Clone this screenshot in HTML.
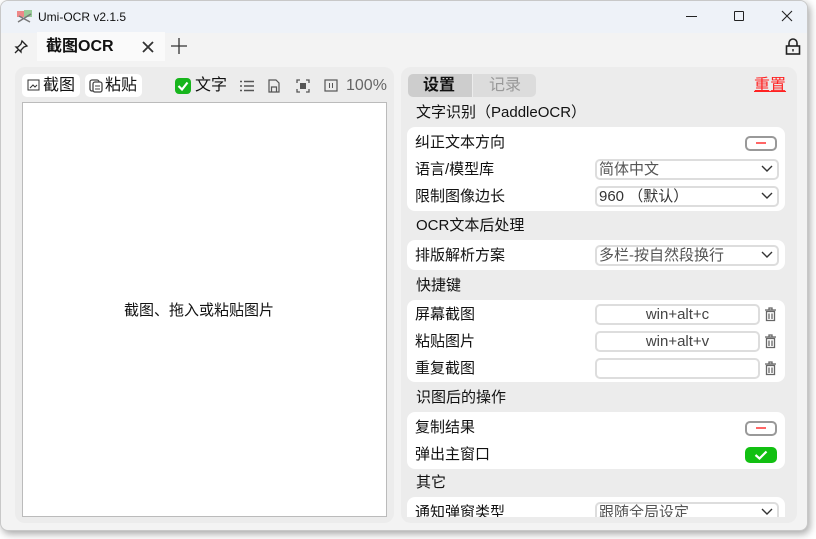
<!DOCTYPE html><html><head><meta charset="utf-8"><style>
*{margin:0;padding:0;box-sizing:border-box}
body{width:816px;height:539px;background:#fff;position:relative;overflow:hidden;font-family:"Liberation Sans","Noto Sans CJK SC",sans-serif;color:#111}
.a{position:absolute}
#win{left:0;top:0;width:808px;height:531px;background:#f3f3f3;border:1px solid #c8c8c8;border-radius:8px;overflow:hidden;box-shadow:2px 3px 8px rgba(0,0,0,.35)}
.t{position:absolute;font-size:15px;line-height:20px;white-space:nowrap}
.card{position:absolute;left:6px;width:378px;background:#fff;border-radius:8px}
.sel{position:absolute;left:188px;width:184px;height:21px;border:2px solid #ddd;border-radius:5px;font-size:15px;line-height:17px;padding-left:2px;color:#555}
.sel svg{position:absolute;right:4px;top:4px}
.hk{position:absolute;left:188px;width:165px;height:21px;border:2px solid #ddd;border-radius:5px;font-size:15px;line-height:17px;text-align:center;color:#444}
.tog{position:absolute;left:338px;width:32px;height:15px;border:2px solid #999;border-radius:5px}
.tog:after{content:"";position:absolute;left:9px;top:4px;width:10px;height:2px;background:#f66}
</style></head><body>
<div id="win" class="a">
<div class="a" style="left:0;top:0;width:808px;height:32px;background:#eef2f8"></div>
<svg class="a" style="left:15px;top:7px" width="18" height="16"><rect x="1" y="3" width="7" height="6" fill="#e88"/><rect x="8" y="2" width="8" height="7" fill="#9c9"/><path d="M2 14L15 6M3 8L14 14" stroke="#777" stroke-width="1.5"/></svg>
<div class="t" style="left:37px;top:6px;font-size:12px">Umi-OCR v2.1.5</div>
<div class="a" style="left:685px;top:15px;width:11px;height:1px;background:#222"></div>
<div class="a" style="left:733px;top:10px;width:10px;height:10px;border:1px solid #222;border-radius:1px"></div>
<svg class="a" style="left:780px;top:9px" width="12" height="12"><path d="M1 1L11 11M11 1L1 11" stroke="#222" stroke-width="1.1"/></svg>
<div class="a" style="left:36px;top:31px;width:128px;height:29px;background:#fafafa"></div>
<svg class="a" style="left:13px;top:38px" width="15" height="15"><path d="M8 2L13 7L10 8L7 11L7 13L2 8L4 8L7 5Z M4.5 10.5L1 14" fill="none" stroke="#222" stroke-width="1.3"/></svg>
<div class="t" style="left:45px;top:36px;font-size:16px;font-weight:bold">截图OCR</div>
<svg class="a" style="left:141px;top:40px" width="12" height="12"><path d="M1 1L11 11M11 1L1 11" stroke="#333" stroke-width="1.8"/></svg>
<svg class="a" style="left:170px;top:37px" width="16" height="16"><path d="M8 0V16M0 8H16" stroke="#333" stroke-width="1.3"/></svg>
<svg class="a" style="left:784px;top:37px" width="16" height="17"><path d="M4 8V5a4 4 0 0 1 8 0V8" fill="none" stroke="#222" stroke-width="1.6"/><rect x="1.5" y="8" width="13" height="8" fill="none" stroke="#222" stroke-width="1.6"/><rect x="7.3" y="11" width="1.4" height="2.5" fill="#222"/></svg>

<div class="a" style="left:14px;top:66px;width:379px;height:456px;background:#ececec;border-radius:10px">
<div class="a" style="left:7px;top:7px;width:58px;height:23px;background:#fff;border-radius:5px"></div>
<svg class="a" style="left:12px;top:12px" width="13" height="12"><rect x="1" y="1" width="11" height="10" fill="none" stroke="#333"/><path d="M3 9L6 6L8 8L10 6" fill="none" stroke="#333"/></svg>
<div class="t" style="left:28px;top:9px;font-size:16px">截图</div>
<div class="a" style="left:70px;top:7px;width:57px;height:23px;background:#fff;border-radius:5px"></div>
<svg class="a" style="left:74px;top:11px" width="14" height="15"><rect x="1" y="2" width="9" height="11" rx="2" fill="none" stroke="#444" stroke-width="1.3"/><rect x="4" y="4" width="9" height="10" rx="2" fill="#fff" stroke="#444" stroke-width="1.3"/><path d="M6 8H11M6 11H11" stroke="#444"/></svg>
<div class="t" style="left:90px;top:9px;font-size:16px">粘贴</div>
<svg class="a" style="left:160px;top:11px" width="16" height="16"><rect width="16" height="16" rx="4" fill="#17b51c"/><path d="M3.5 8L7 11.5L12.5 4.5" fill="none" stroke="#fff" stroke-width="2.2"/></svg>
<div class="t" style="left:180px;top:9px;font-size:16px">文字</div>
<svg class="a" style="left:225px;top:13px" width="14" height="12"><path d="M0 1.5H2M4 1.5H14M0 6H2M4 6H14M0 10.5H2M4 10.5H14" stroke="#555" stroke-width="1.4"/></svg>
<svg class="a" style="left:253px;top:12px" width="12" height="14"><path d="M1 1H8L11 4V13H1Z M3.5 13V8H8.5V13" fill="none" stroke="#555" stroke-width="1.2"/></svg>
<svg class="a" style="left:281px;top:12px" width="14" height="14"><path d="M1 4V1H4M10 1H13V4M13 10V13H10M4 13H1V10" fill="none" stroke="#555" stroke-width="1.3"/><rect x="4" y="4" width="6" height="6" fill="#555"/></svg>
<svg class="a" style="left:309px;top:12px" width="14" height="13"><rect x="1" y="1" width="12" height="11" fill="none" stroke="#555" stroke-width="1.2"/><path d="M5.5 4V9M8.5 4V9" stroke="#555"/></svg>
<div class="t" style="left:331px;top:9px;font-size:16px;color:#666">100%</div>
<div class="a" style="left:7px;top:35px;width:365px;height:415px;background:#fff;border:1px solid #bbb"></div>
<div class="t" style="left:109px;top:234px">截图、拖入或粘贴图片</div>
</div>

<div class="a" style="left:400px;top:66px;width:396px;height:456px;background:#ececec;border-radius:10px;overflow:hidden">
<div class="a" style="left:7px;top:7px;width:64px;height:23px;background:#cdcdcd;border-radius:5px 0 0 5px"></div>
<div class="a" style="left:72px;top:7px;width:63px;height:23px;background:#dcdcdc;border-radius:0 5px 5px 0"></div>
<div class="t" style="left:22px;top:9px;font-size:16px;font-weight:bold">设置</div>
<div class="t" style="left:88px;top:9px;font-size:16px;color:#999">记录</div>
<div class="t" style="left:353px;top:9px;font-size:16px;color:#f22;text-decoration:underline">重置</div>
<div class="t" style="left:15px;top:36px">文字识别（PaddleOCR）</div>
<div class="card" style="top:60px;height:84px">
<div class="t" style="left:8px;top:6px">纠正文本方向</div><div class="tog" style="top:9px"></div>
<div class="t" style="left:8px;top:33px">语言/模型库</div><div class="sel" style="top:32px">简体中文<svg width="12" height="8"><path d="M1 1L6 6L11 1" fill="none" stroke="#333" stroke-width="1.4"/></svg></div>
<div class="t" style="left:8px;top:60px">限制图像边长</div><div class="sel" style="top:59px;color:#333">960 （默认）<svg width="12" height="8"><path d="M1 1L6 6L11 1" fill="none" stroke="#333" stroke-width="1.4"/></svg></div>
</div>
<div class="t" style="left:15px;top:149px">OCR文本后处理</div>
<div class="card" style="top:173px;height:30px">
<div class="t" style="left:8px;top:6px">排版解析方案</div><div class="sel" style="top:5px">多栏-按自然段换行<svg width="12" height="8"><path d="M1 1L6 6L11 1" fill="none" stroke="#333" stroke-width="1.4"/></svg></div>
</div>
<div class="t" style="left:15px;top:209px">快捷键</div>
<div class="card" style="top:233px;height:82px">
<div class="t" style="left:8px;top:5px">屏幕截图</div><div class="hk" style="top:4px">win+alt+c</div>
<div class="t" style="left:8px;top:32px">粘贴图片</div><div class="hk" style="top:31px">win+alt+v</div>
<div class="t" style="left:8px;top:59px">重复截图</div><div class="hk" style="top:58px"></div>
<svg class="a" style="left:357px;top:7px" width="13" height="15"><path d="M1 3H12M5 3V1H8V3M2.5 4.5H10.5V13.5H2.5Z M5 6.5V12M8 6.5V12" fill="none" stroke="#666" stroke-width="1.3"/></svg>
<svg class="a" style="left:357px;top:34px" width="13" height="15"><path d="M1 3H12M5 3V1H8V3M2.5 4.5H10.5V13.5H2.5Z M5 6.5V12M8 6.5V12" fill="none" stroke="#666" stroke-width="1.3"/></svg>
<svg class="a" style="left:357px;top:61px" width="13" height="15"><path d="M1 3H12M5 3V1H8V3M2.5 4.5H10.5V13.5H2.5Z M5 6.5V12M8 6.5V12" fill="none" stroke="#666" stroke-width="1.3"/></svg>
</div>
<div class="t" style="left:15px;top:321px">识图后的操作</div>
<div class="card" style="top:345px;height:57px">
<div class="t" style="left:8px;top:6px">复制结果</div><div class="tog" style="top:9px"></div>
<div class="t" style="left:8px;top:33px">弹出主窗口</div>
<div class="a" style="left:338px;top:35px;width:32px;height:16px;background:#12c012;border-radius:5px"><svg style="position:absolute;left:9px;top:3px" width="14" height="10"><path d="M1.5 5L5.5 8.5L12.5 1.5" fill="none" stroke="#fff" stroke-width="2.2"/></svg></div>
</div>
<div class="t" style="left:15px;top:406px">其它</div>
<div class="card" style="top:430px;height:40px">
<div class="t" style="left:8px;top:6px">通知弹窗类型</div><div class="sel" style="top:5px">跟随全局设定<svg width="12" height="8"><path d="M1 1L6 6L11 1" fill="none" stroke="#333" stroke-width="1.4"/></svg></div>
</div>
<div class="a" style="left:0;top:450px;width:396px;height:6px;background:#ececec"></div>
</div>
</div>
</body></html>
